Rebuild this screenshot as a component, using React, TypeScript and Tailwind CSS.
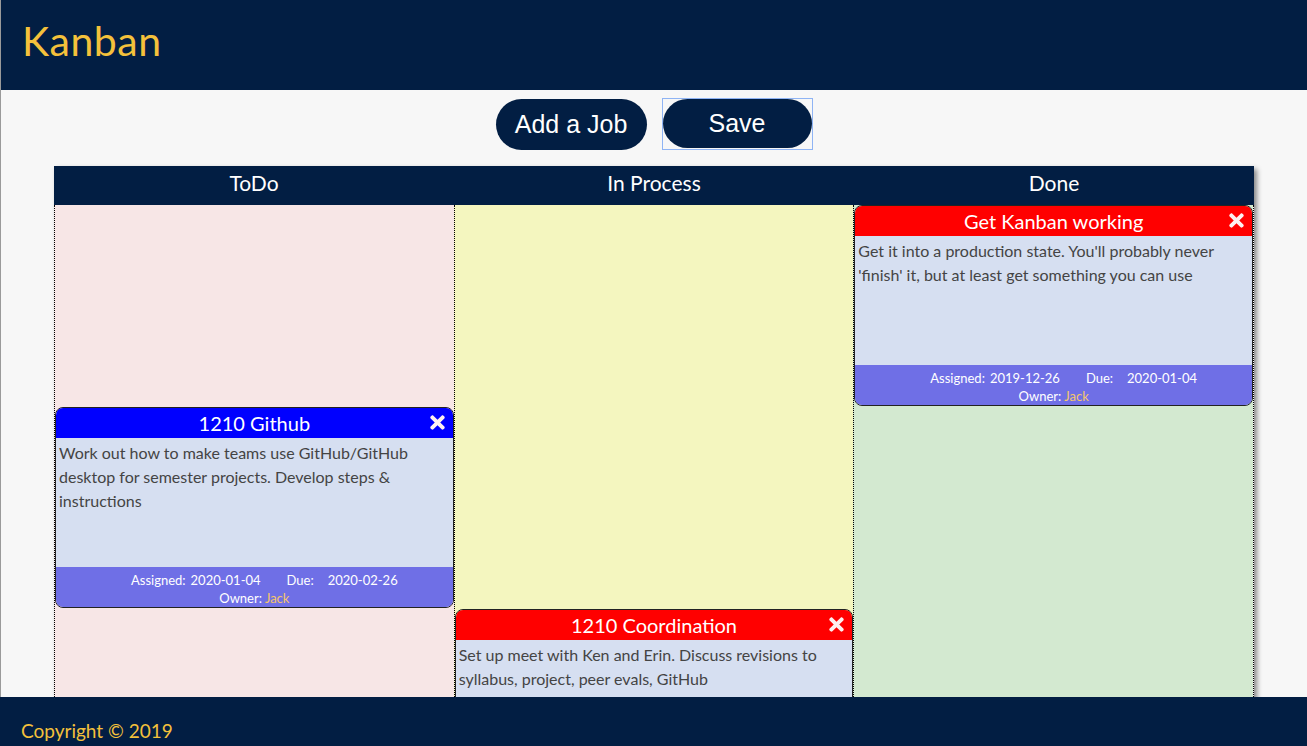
import { FaTimes } from 'react-icons/fa';

type Job = {
  title: string;
  color: string;
  text: string;
  assigned: string;
  due: string;
  owner: string;
};

const columns: { name: string; bg: string; offset: string; jobs: Job[] }[] = [
  {
    name: 'ToDo',
    bg: 'bg-[#f7e6e6]',
    offset: 'pt-[202px]',
    jobs: [
      {
        title: '1210 Github',
        color: 'bg-[#0000ff]',
        text: 'Work out how to make teams use GitHub/GitHub desktop for semester projects. Develop steps & instructions',
        assigned: '2020-01-04',
        due: '2020-02-26',
        owner: 'Jack',
      },
    ],
  },
  {
    name: 'In Process',
    bg: 'bg-[#f4f6bf]',
    offset: 'pt-[404px]',
    jobs: [
      {
        title: '1210 Coordination',
        color: 'bg-[#ff0000]',
        text: 'Set up meet with Ken and Erin. Discuss revisions to syllabus, project, peer evals, GitHub',
        assigned: '2019-12-20',
        due: '2020-01-10',
        owner: 'Jack',
      },
    ],
  },
  {
    name: 'Done',
    bg: 'bg-[#d3e9d0]',
    offset: 'pt-0',
    jobs: [
      {
        title: 'Get Kanban working',
        color: 'bg-[#ff0000]',
        text: "Get it into a production state. You'll probably never 'finish' it, but at least get something you can use",
        assigned: '2019-12-26',
        due: '2020-01-04',
        owner: 'Jack',
      },
    ],
  },
];

function JobCard({ job }: { job: Job }) {
  return (
    <div className="h-[201px] flex flex-col rounded-lg border border-[#222] overflow-hidden">
      {/* title bar */}
      <div className={`${job.color} h-[30px] flex items-center justify-center relative text-white text-[20px]`}>
        {job.title}
        <FaTimes className="absolute right-[5px] top-[4px] text-[#fdf0f0]" size={21} />
      </div>
      <div className="flex-1 bg-[#d6dff1] px-[3px] pt-[3px] text-[16px] leading-[24px] text-[#444]">
        {job.text}
      </div>
      <div className="h-[40px] bg-[#6f6fe6] text-white text-[13px] leading-[18px] flex flex-col items-center justify-center pt-[3px]">
        <div className="flex pl-[20px]">
          <span>Assigned:</span>
          <span className="ml-[5px]">{job.assigned}</span>
          <span className="ml-[26px]">Due:</span>
          <span className="ml-[14px]">{job.due}</span>
        </div>
        <div>
          Owner: <span className="text-[#f5c66b]">{job.owner}</span>
        </div>
      </div>
    </div>
  );
}

export default function App() {
  return (
    <div className="bg-[#f7f7f7] font-['Lato',_'Open_Sans',_sans-serif] border-l border-[#9a9a9a] overflow-hidden h-[746px]">
      {/* Header */}
      <header className="h-[90px] bg-[#021e43] flex items-center px-[21px] pb-[8px]">
        <h1 className="text-[41px] text-[#f4c13b] font-normal tracking-[0.5px]">Kanban</h1>
      </header>

      {/* Buttons */}
      <div className="flex justify-center gap-[15px] pt-[8px] font-['Liberation_Sans',_Arial,_sans-serif]">
        <button className="w-[151px] h-[51px] rounded-full bg-[#021e43] text-white text-[25px] mt-[1px]">
          Add a Job
        </button>
        <div className="border border-[#8fb4f4] p-0">
          <button className="w-[149px] h-[49px] rounded-full bg-[#021e43] text-white text-[25px] block">
            Save
          </button>
        </div>
      </div>

      {/* Board */}
      <div className="mx-[53px] mt-[16px] shadow-[3px_3px_5px_rgba(0,0,0,0.45)]">
        <div className="grid grid-cols-3 h-[39px] bg-[#021e43] text-white text-[21px]">
          {columns.map((c) => (
            <div key={c.name} className="flex items-center justify-center pb-[6px]">
              {c.name}
            </div>
          ))}
        </div>
        <div className="grid grid-cols-3 border-r border-dotted border-black">
          {columns.map((c) => (
            <div key={c.name} className={`${c.bg} ${c.offset} h-[620px] border-l border-dotted border-black`}>
              {c.jobs.map((j) => (
                <JobCard key={j.title} job={j} />
              ))}
            </div>
          ))}
        </div>
      </div>

      {/* Footer */}
      <footer className="fixed bottom-0 left-0 right-0 h-[49px] bg-[#021e43] flex items-end px-[21px] pb-[1px]">
        <span className="text-[#f4c13b] text-[19px]">Copyright © 2019</span>
      </footer>
    </div>
  );
}
